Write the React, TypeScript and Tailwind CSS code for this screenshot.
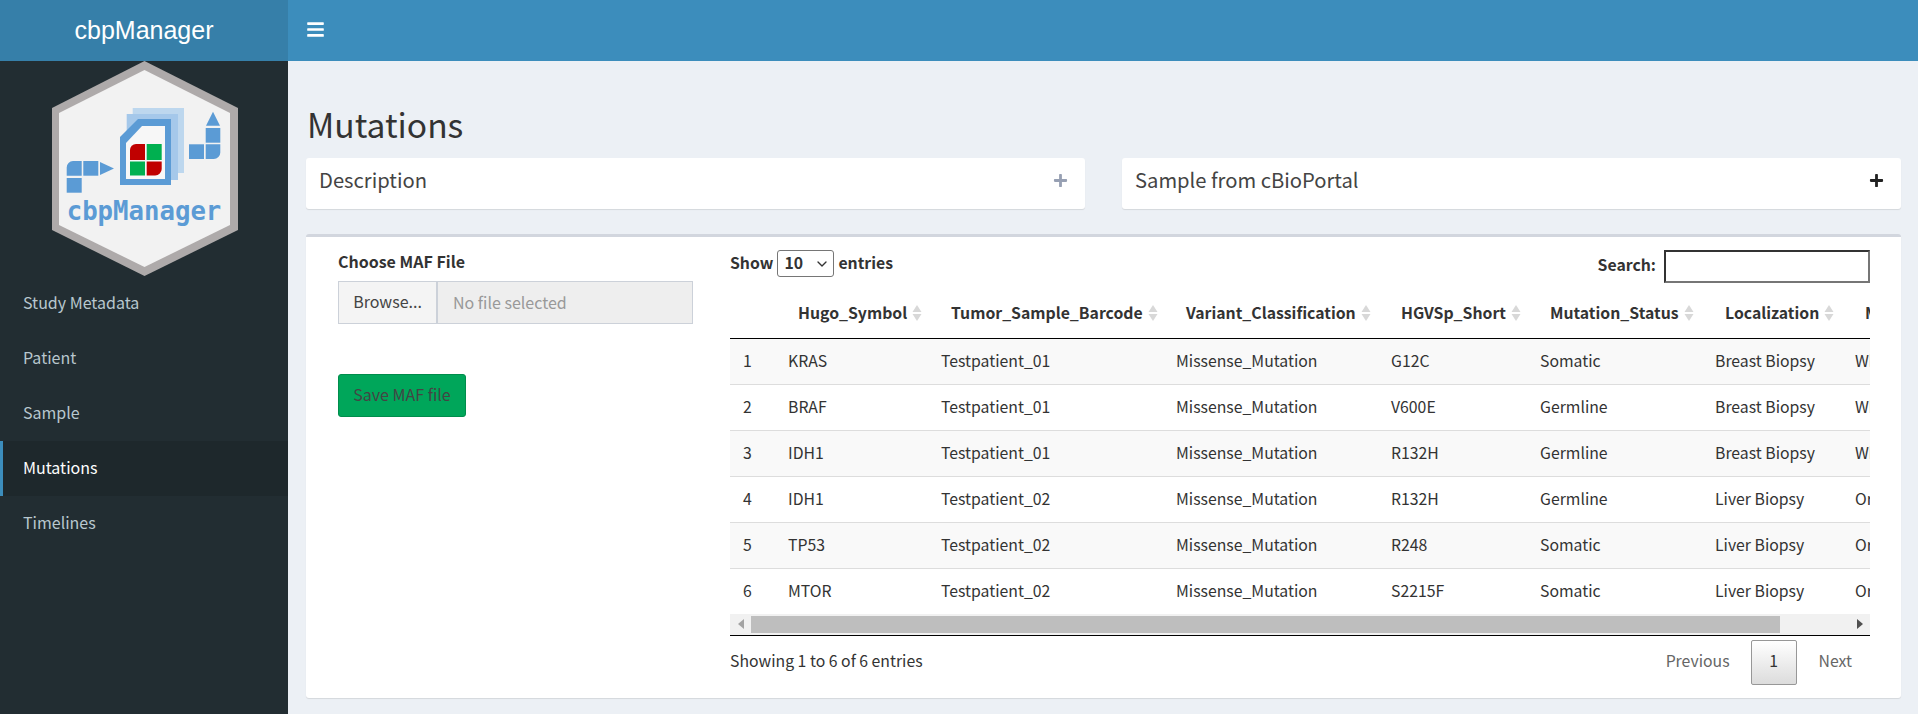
import { FaBars, FaPlus } from 'react-icons/fa';
import { ChevronDown } from 'lucide-react';

const columns = [
  { title: 'Hugo_Symbol', width: 'w-[153px]' },
  { title: 'Tumor_Sample_Barcode', width: 'w-[235px]' },
  { title: 'Variant_Classification', width: 'w-[215px]' },
  { title: 'HGVSp_Short', width: 'w-[149px]' },
  { title: 'Mutation_Status', width: 'w-[175px]' },
  { title: 'Localization', width: 'w-[140px]' },
  { title: 'Material', width: 'w-[140px]' },
];

const rows = [
  ['1', 'KRAS', 'Testpatient_01', 'Missense_Mutation', 'G12C', 'Somatic', 'Breast Biopsy', 'Whole'],
  ['2', 'BRAF', 'Testpatient_01', 'Missense_Mutation', 'V600E', 'Germline', 'Breast Biopsy', 'Whole'],
  ['3', 'IDH1', 'Testpatient_01', 'Missense_Mutation', 'R132H', 'Germline', 'Breast Biopsy', 'Whole'],
  ['4', 'IDH1', 'Testpatient_02', 'Missense_Mutation', 'R132H', 'Germline', 'Liver Biopsy', 'Organ'],
  ['5', 'TP53', 'Testpatient_02', 'Missense_Mutation', 'R248', 'Somatic', 'Liver Biopsy', 'Organ'],
  ['6', 'MTOR', 'Testpatient_02', 'Missense_Mutation', 'S2215F', 'Somatic', 'Liver Biopsy', 'Organ'],
];

const menu = ['Study Metadata', 'Patient', 'Sample', 'Mutations', 'Timelines'];

const Logo = () => (
  <svg viewBox="0 61 288 215" className="block h-[215px] w-[288px]">
    <polygon points="144.5,61 238,108 238,230 144.5,276 52,230 52,108" fill="#aeaaaa" />
    <polygon points="144.5,70 230,113 230,225 144.5,267 59,225 59,113" fill="#f2f2f2" />
    {/* stacked sheets */}
    <rect x="132.7" y="108" width="51.3" height="65" fill="#bdd7ee" />
    <rect x="126.7" y="114" width="51.3" height="66" fill="#a5c8ea" />
    <polygon points="138,119 171,119 171,185 120,185 120,137" fill="#5b9bd5" />
    <polygon points="142,126 165,126 165,179 126,179 126,143" fill="#f7f7f7" />
    {/* red and green cells */}
    <path d="M136 144H145V160H130V150a6 6 0 0 1 6-6z" fill="#c00000" />
    <rect x="146.7" y="144" width="15" height="16" fill="#00b050" />
    <rect x="130" y="161.5" width="15" height="14" fill="#00b050" />
    <path d="M146.7 161.5H161.7V169a6.5 6.5 0 0 1-6.5 6.5H146.7z" fill="#c00000" />
    {/* pipe on the left */}
    <rect x="66.7" y="178" width="15" height="14.7" fill="#5b9bd5" />
    <path d="M73 161H81.7V175.7H66.7V167.5a6.5 6.5 0 0 1 6.3-6.5z" fill="#5b9bd5" />
    <rect x="83.3" y="161" width="15" height="14.7" fill="#5b9bd5" />
    <polygon points="100,162 114,168.5 100,175" fill="#5b9bd5" />
    {/* pipe on the right */}
    <rect x="189" y="144.3" width="15" height="14.7" fill="#5b9bd5" />
    <path d="M205.7 144.3H220.3V152.5a6.5 6.5 0 0 1-6.5 6.5H205.7z" fill="#5b9bd5" />
    <rect x="205.7" y="128" width="14.6" height="14.7" fill="#5b9bd5" />
    <polygon points="213,111.7 220,125.7 206,125.7" fill="#5b9bd5" />
    <text
      x="144"
      y="220"
      textAnchor="middle"
      fontFamily="'DejaVu Sans Mono', monospace"
      fontWeight="700"
      fontSize="25.7"
      fill="#5b9bd5"
    >
      cbpManager
    </text>
  </svg>
);

const SortIcon = () => (
  <svg viewBox="0 0 10 18" className="ml-[5px] h-[18px] w-[10px] shrink-0">
    <polygon points="5,1 9.5,8 0.5,8" fill="#d8d8d8" />
    <polygon points="5,17 9.5,10 0.5,10" fill="#d8d8d8" />
  </svg>
);

const Sidebar = () => (
  <aside className="flex w-[288px] shrink-0 flex-col bg-[#222d32]">
    <div className="flex h-[61px] items-center justify-center bg-[#367fa9] font-['Liberation_Sans',sans-serif] text-[25px] text-white">
      cbpManager
    </div>
    <Logo />
    <ul>
      {menu.map((item) => (
        <li
          key={item}
          className={
            item === 'Mutations'
              ? 'flex h-[55px] items-center border-l-[3px] border-[#3c8dbc] bg-[#1e282c] pb-[3px] pl-5 text-white'
              : 'flex h-[55px] items-center border-l-[3px] border-transparent pb-[3px] pl-5 text-[#b8c7ce]'
          }
        >
          {item}
        </li>
      ))}
    </ul>
  </aside>
);

const CollapsedBox = ({ title, iconClass }: { title: string; iconClass: string }) => (
  <div className="flex h-[51px] items-center justify-between rounded-[3px] bg-white pb-[6px] pl-[13px] pr-[17px] shadow-[0_1px_1px_rgba(0,0,0,0.1)]">
    <h3 className="text-[20.2px] text-[#444]">{title}</h3>
    <FaPlus className={iconClass} />
  </div>
);

const UploadPanel = () => (
  <div className="w-[355px] shrink-0 pt-[14px]">
    <label className="block text-[16px] font-semibold leading-[20px] text-[#333]">Choose MAF File</label>
    <div className="mt-[10px] flex h-[43px] border border-[#ccd1d9]">
      <div className="flex w-[99px] items-center justify-center border-r-2 border-[#ccd1d9] bg-[#f4f4f4] pb-[3px] text-[#444]">
        Browse...
      </div>
      <div className="flex flex-1 items-center bg-[#eee] pb-[2px] pl-[15px] text-[#999]">No file selected</div>
    </div>
    <button className="mt-[50px] h-[43px] w-[128px] rounded-[3px] border border-[#008d4c] bg-[#00a65a] pb-[3px] text-[#444]">
      Save MAF file
    </button>
  </div>
);

const DataTable = () => (
  <div className="min-w-0 flex-1 pt-[13px] text-[15.8px] text-[#333]">
    <div className="flex h-[33px] items-start justify-between">
      <div className="flex h-[27px] items-center gap-1 pb-[2px] font-semibold">
        Show
        <div className="relative mt-[2px] h-[27px] w-[57px]">
          <select className="h-[27px] w-[57px] appearance-none rounded-[3px] border border-[#767676] bg-white pb-[2px] pl-[6px] font-semibold">
            <option>10</option>
          </select>
          <ChevronDown className="absolute right-[4px] top-[6px] h-4 w-4 text-[#333]" />
        </div>
        entries
      </div>
      <div className="flex items-center gap-2 font-semibold">
        <span className="pb-[3px]">Search:</span>
        <input className="h-[33px] w-[206px] border-2 border-t-[#333] border-l-[#333] border-r-[#767676] border-b-[#767676] bg-white" />
      </div>
    </div>
    <div className="mt-[5px] overflow-hidden border-b border-black">
      <table className="w-[1255px] table-fixed border-collapse">
        <colgroup>
          <col className="w-[48px]" />
          {columns.map((c) => (
            <col key={c.title} className={c.width} />
          ))}
        </colgroup>
        <thead>
          <tr className="h-[50px] border-b border-black">
            <th />
            {columns.map((c) => (
              <th key={c.title} className="pl-5 text-left font-semibold">
                <div className="flex items-center whitespace-nowrap">
                  {c.title}
                  <SortIcon />
                </div>
              </th>
            ))}
          </tr>
        </thead>
        <tbody>
          {rows.map((row, i) => (
            <tr key={row[0]} className={i % 2 === 0 ? 'h-[46px] border-b border-[#ddd] bg-[#f9f9f9]' : 'h-[46px] border-b border-[#ddd] bg-white'}>
              {row.map((cell, j) => (
                <td key={j} className={j === 0 ? 'pl-[13px]' : 'whitespace-nowrap pl-[10px]'}>
                  {cell}
                </td>
              ))}
            </tr>
          ))}
        </tbody>
      </table>
      <div className="-mt-px flex h-[21px] items-center bg-[#f1f1f1]">
        <div className="flex w-[21px] justify-center">
          <svg viewBox="0 0 6 10" className="h-[10px] w-[6px]">
            <polygon points="6,0 6,10 0,5" fill="#a3a3a3" />
          </svg>
        </div>
        <div className="h-[17px] w-[1029px] bg-[#bebebe]" />
        <div className="flex-1" />
        <div className="flex w-[21px] justify-center">
          <svg viewBox="0 0 6 10" className="h-[10px] w-[6px]">
            <polygon points="0,0 0,10 6,5" fill="#505050" />
          </svg>
        </div>
      </div>
    </div>
    <div className="mt-[4px] flex items-center justify-between">
      <span className="pb-[3px]">Showing 1 to 6 of 6 entries</span>
      <div className="flex items-center pr-[18px]">
        <span className="pb-[2px] text-[#666]">Previous</span>
        <span className="ml-[21px] flex h-[45px] w-[46px] items-center justify-center rounded-[2px] border border-[#979797] bg-gradient-to-b from-white to-[#dcdcdc] pb-[2px]">
          1
        </span>
        <span className="ml-[22px] pb-[2px] text-[#666]">Next</span>
      </div>
    </div>
  </div>
);

export default function App() {
  return (
    <div className="flex h-[714px] overflow-hidden bg-[#ecf0f5] font-['Noto_Sans_CJK_SC','Noto_Sans',sans-serif] text-[16px]">
      <Sidebar />
      <div className="flex min-w-0 flex-1 flex-col">
        <header className="flex h-[61px] shrink-0 items-center bg-[#3c8dbc] pb-[2px] pl-[18px]">
          <FaBars className="text-[19px] text-white" />
        </header>
        <main className="flex-1 pl-[18px] pr-[17px]">
          <h1 className="pb-[2px] pl-px pt-[40px] text-[33.6px] leading-[45px] text-[#333]">Mutations</h1>
          <div className="mt-[10px] grid grid-cols-[779px_1fr] gap-[37px]">
            <CollapsedBox title="Description" iconClass="text-[15px] text-[#97a0b3]" />
            <CollapsedBox title="Sample from cBioPortal" iconClass="text-[15px] text-[#222]" />
          </div>
          <section className="mt-[25px] flex h-[464px] gap-[37px] rounded-[3px] border-t-[3px] border-[#d2d6de] bg-white pl-8 pr-[31px] shadow-[0_1px_1px_rgba(0,0,0,0.1)]">
            <UploadPanel />
            <DataTable />
          </section>
        </main>
      </div>
    </div>
  );
}
